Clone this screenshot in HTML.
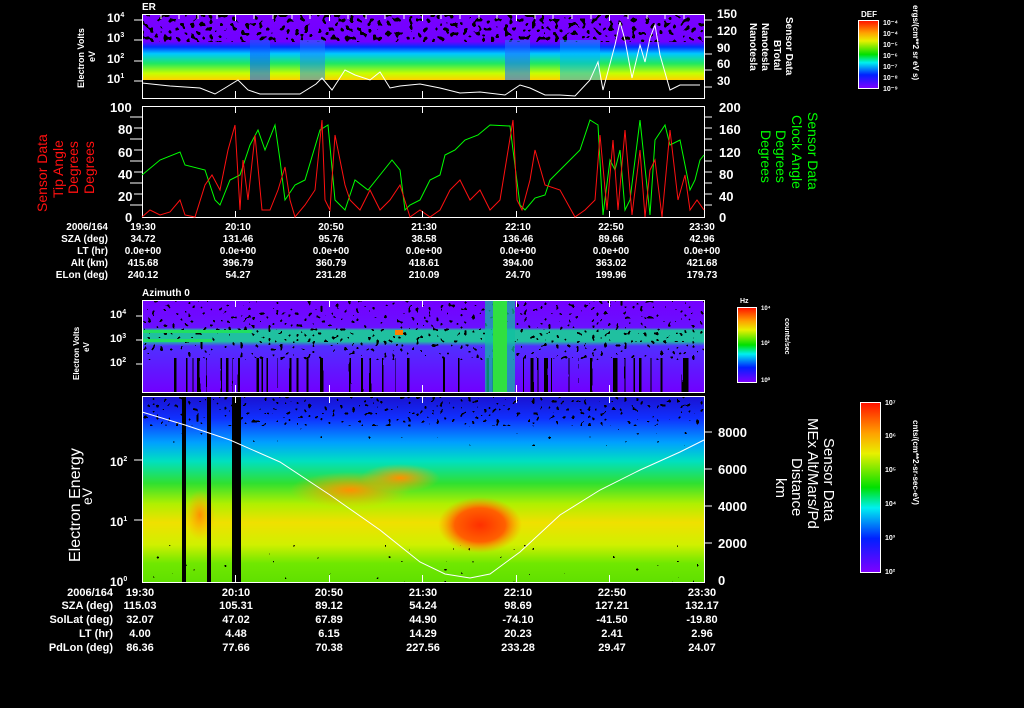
<!DOCTYPE html>
<html><head><meta charset="utf-8"><style>
html,body{margin:0;padding:0;background:#000;width:1024px;height:708px;overflow:hidden}
svg{display:block}
text{font-family:"Liberation Sans",sans-serif;fill:#fff;font-weight:bold}
</style></head><body>
<svg width="1024" height="708" viewBox="0 0 1024 708" xmlns="http://www.w3.org/2000/svg">
<defs>
<filter id="spk" x="0" y="0" width="100%" height="100%">
<feTurbulence type="fractalNoise" baseFrequency="0.22" numOctaves="1" seed="3" result="n"/>
<feColorMatrix in="n" type="matrix" values="0 0 0 0 0  0 0 0 0 0  0 0 0 0 0  1 0 0 0 0"/>
<feComponentTransfer><feFuncA type="discrete" tableValues="0 0 0 0 0 0 1 1 1 1"/></feComponentTransfer>
<feComposite in="SourceGraphic" operator="in"/>
</filter>
<filter id="spk2" x="0" y="0" width="100%" height="100%">
<feTurbulence type="fractalNoise" baseFrequency="0.25" numOctaves="1" seed="9" result="n"/>
<feColorMatrix in="n" type="matrix" values="0 0 0 0 0  0 0 0 0 0  0 0 0 0 0  1 0 0 0 0"/>
<feComponentTransfer><feFuncA type="discrete" tableValues="0 0 0 0 0 0 1 1 1"/></feComponentTransfer>
<feComposite in="SourceGraphic" operator="in"/>
</filter>
<filter id="spk3" x="0" y="0" width="100%" height="100%">
<feTurbulence type="fractalNoise" baseFrequency="0.25" numOctaves="1" seed="5" result="n"/>
<feColorMatrix in="n" type="matrix" values="0 0 0 0 0  0 0 0 0 0  0 0 0 0 0  1 0 0 0 0"/>
<feComponentTransfer><feFuncA type="discrete" tableValues="0 0 0 0 0 0 1 1"/></feComponentTransfer>
<feComposite in="SourceGraphic" operator="in"/>
</filter>
<filter id="strp" x="0" y="0" width="100%" height="100%">
<feTurbulence type="fractalNoise" baseFrequency="0.3 0.0008" numOctaves="1" seed="7" result="n"/>
<feColorMatrix in="n" type="matrix" values="0 0 0 0 0  0 0 0 0 0  0 0 0 0 0  1 0 0 0 0"/>
<feComponentTransfer><feFuncA type="discrete" tableValues="0 0 0 0 0 1 1 1"/></feComponentTransfer>
<feComposite in="SourceGraphic" operator="in"/>
</filter>
<linearGradient id="p1" x1="0" y1="0" x2="0" y2="1">
<stop offset="0" stop-color="#7a00ff"/><stop offset="0.42" stop-color="#7000ff"/>
<stop offset="0.5" stop-color="#0030ff"/><stop offset="0.6" stop-color="#00c8ff"/>
<stop offset="0.75" stop-color="#20e860"/><stop offset="0.9" stop-color="#c8ff00"/>
<stop offset="1" stop-color="#ffd000"/></linearGradient>
<linearGradient id="p3" x1="0" y1="0" x2="0" y2="1">
<stop offset="0" stop-color="#7400ff"/><stop offset="0.3" stop-color="#6a10ff"/>
<stop offset="0.33" stop-color="#20c0a0"/><stop offset="0.45" stop-color="#20c0a0"/><stop offset="0.5" stop-color="#5030ff"/>
<stop offset="1" stop-color="#7000ff"/></linearGradient>
<linearGradient id="p4" x1="0" y1="0" x2="0" y2="1">
<stop offset="0" stop-color="#1a10d0"/><stop offset="0.12" stop-color="#1030ff"/>
<stop offset="0.25" stop-color="#00a0ff"/><stop offset="0.35" stop-color="#00e0c0"/>
<stop offset="0.47" stop-color="#30e030"/><stop offset="0.58" stop-color="#b0f000"/>
<stop offset="0.68" stop-color="#f0e000"/><stop offset="0.8" stop-color="#d0f000"/>
<stop offset="0.9" stop-color="#70e800"/><stop offset="1" stop-color="#60e000"/></linearGradient>
<linearGradient id="cb" x1="0" y1="0" x2="0" y2="1">
<stop offset="0" stop-color="#ff1000"/><stop offset="0.18" stop-color="#ffa000"/>
<stop offset="0.3" stop-color="#e8f000"/><stop offset="0.5" stop-color="#00e000"/>
<stop offset="0.62" stop-color="#00f0f0"/><stop offset="0.8" stop-color="#0020ff"/>
<stop offset="1" stop-color="#8000ff"/></linearGradient>
<radialGradient id="org" cx="0.5" cy="0.5" r="0.5"><stop offset="0" stop-color="#ff3000"/><stop offset="0.6" stop-color="#ff6000"/><stop offset="1" stop-color="#ff9000" stop-opacity="0"/></radialGradient>
<radialGradient id="org2" cx="0.5" cy="0.5" r="0.5"><stop offset="0" stop-color="#ff9000"/><stop offset="1" stop-color="#ffb000" stop-opacity="0"/></radialGradient>
</defs>

<!-- Panel 1 -->
<rect x="142" y="14" width="562" height="66" fill="url(#p1)"/>
<rect x="142" y="14" width="562" height="28" fill="#000" filter="url(#spk)"/>
<rect x="250" y="40" width="20" height="40" fill="#1060ff" opacity="0.6"/>
<rect x="300" y="40" width="25" height="40" fill="#2080ff" opacity="0.5"/>
<rect x="505" y="40" width="25" height="40" fill="#2070ff" opacity="0.6"/>
<rect x="560" y="40" width="40" height="40" fill="#00b0ff" opacity="0.5"/>
<polyline fill="none" stroke="#fff" stroke-width="1" points="142,83 170,86 200,88 215,94 225,88 238,80 248,90 260,94 300,94 316,84 322,78 332,90 345,70 355,75 370,80 380,72 390,88 400,86 420,84 440,88 460,93 480,92 505,95 520,85 530,88 545,95 560,95 575,96 590,80 598,62 603,90 615,45 620,22 625,40 632,78 640,45 645,62 650,38 655,25 660,55 670,90 680,85 700,85"/>
<rect x="142.5" y="14.5" width="562" height="84" fill="none" stroke="#fff"/>
<text x="142" y="10" font-size="10">ER</text>
<g font-size="12"><text x="107" y="22">10<tspan font-size="7" dy="-5">4</tspan></text><text x="107" y="42">10<tspan font-size="7" dy="-5">3</tspan></text><text x="107" y="63">10<tspan font-size="7" dy="-5">2</tspan></text><text x="107" y="83">10<tspan font-size="7" dy="-5">1</tspan></text></g>
<g font-size="12"><text x="717" y="18">150</text><text x="717" y="35">120</text><text x="717" y="52">90</text><text x="717" y="68">60</text><text x="717" y="85">30</text></g>
<text transform="translate(84,88) rotate(-90)" font-size="9">Electron Volts</text>
<text transform="translate(95,62) rotate(-90)" font-size="9">eV</text>
<g font-size="10"><text transform="translate(786,17) rotate(90)">Sensor Data</text><text transform="translate(774,40) rotate(90)">BTotal</text><text transform="translate(762,23) rotate(90)">Nanotesla</text><text transform="translate(750,23) rotate(90)">Nanotesla</text></g>
<rect x="858.5" y="20.5" width="20" height="68" fill="url(#cb)" stroke="#fff"/>
<text x="861" y="17" font-size="8">DEF</text>
<g font-size="7"><text x="883" y="25">10⁻⁴</text><text x="883" y="36">10⁻⁴</text><text x="883" y="47">10⁻⁵</text><text x="883" y="58">10⁻⁶</text><text x="883" y="69">10⁻⁷</text><text x="883" y="80">10⁻⁸</text><text x="883" y="91">10⁻⁹</text></g>
<text transform="translate(913,5) rotate(90)" font-size="8">ergs/(cm**2 sr eV s)</text>

<!-- Panel 2 -->
<rect x="142.5" y="106.5" width="562" height="111" fill="none" stroke="#fff"/>
<polyline fill="none" stroke="#00ff00" stroke-width="1" points="142,175 160,160 180,152 185,165 205,170 215,200 220,205 230,180 240,175 250,145 258,130 265,150 275,125 280,160 285,200 295,185 305,180 320,130 328,125 335,200 345,210 355,180 368,190 380,175 392,160 400,170 405,210 410,205 420,200 430,180 440,175 445,155 455,150 465,140 478,135 490,125 510,126 513,150 520,205 525,210 535,198 545,195 550,180 560,170 570,160 580,150 590,120 598,125 603,215 610,160 615,170 620,150 625,210 630,200 640,120 650,215 655,140 665,125 670,145 680,140 690,190 695,180 700,160 704,155"/>
<polyline fill="none" stroke="#ff1010" stroke-width="1" points="142,217 150,210 160,215 170,212 180,200 185,215 195,217 205,185 212,175 220,190 228,150 235,125 240,210 243,160 248,200 255,135 262,210 270,210 278,190 285,167 290,200 295,217 305,205 315,190 322,120 325,200 330,210 335,135 340,160 345,185 350,200 360,210 370,190 380,210 390,200 400,185 410,217 420,210 430,217 440,210 450,190 460,180 470,200 480,190 490,210 500,200 513,120 517,200 522,210 530,180 535,150 545,185 560,190 575,217 585,210 595,200 600,135 607,210 613,140 618,210 625,130 632,215 640,150 645,217 650,170 655,160 662,217 670,130 678,200 685,175 690,210 697,200 704,210"/>
<g font-size="13"><text x="110" y="112">100</text><text x="118" y="134">80</text><text x="118" y="157">60</text><text x="118" y="179">40</text><text x="118" y="201">20</text><text x="125" y="222">0</text></g>
<g font-size="13"><text x="719" y="112">200</text><text x="719" y="134">160</text><text x="719" y="157">120</text><text x="719" y="179">80</text><text x="719" y="201">40</text><text x="719" y="222">0</text></g>
<g font-size="14"><text transform="translate(47,212) rotate(-90)" style="fill:#ff1010;font-weight:normal">Sensor Data</text><text transform="translate(63,198) rotate(-90)" style="fill:#ff1010;font-weight:normal">Tip Angle</text><text transform="translate(78,194) rotate(-90)" style="fill:#ff1010;font-weight:normal">Degrees</text><text transform="translate(94,194) rotate(-90)" style="fill:#ff1010;font-weight:normal">Degrees</text></g>
<g><text transform="translate(808,112) rotate(90)" font-size="14" style="fill:#00ff00;font-weight:normal">Sensor Data</text><text transform="translate(792,115) rotate(90)" font-size="14" style="fill:#00ff00;font-weight:normal">Clock Angle</text><text transform="translate(776,130) rotate(90)" font-size="14" style="fill:#00ff00;font-weight:normal">Degrees</text><text transform="translate(761,130) rotate(90)" font-size="14" style="fill:#00ff00;font-weight:normal">Degrees</text></g>

<!-- Table 1 -->
<g font-size="10" text-anchor="end"><text x="108" y="230">2006/164</text><text x="108" y="242">SZA (deg)</text><text x="108" y="254">LT (hr)</text><text x="108" y="266">Alt (km)</text><text x="108" y="278">ELon (deg)</text></g>
<g font-size="10" text-anchor="middle">
<text x="143" y="230">19:30</text><text x="143" y="242">34.72</text><text x="143" y="254">0.0e+00</text><text x="143" y="266">415.68</text><text x="143" y="278">240.12</text>
<text x="238" y="230">20:10</text><text x="238" y="242">131.46</text><text x="238" y="254">0.0e+00</text><text x="238" y="266">396.79</text><text x="238" y="278">54.27</text>
<text x="331" y="230">20:50</text><text x="331" y="242">95.76</text><text x="331" y="254">0.0e+00</text><text x="331" y="266">360.79</text><text x="331" y="278">231.28</text>
<text x="424" y="230">21:30</text><text x="424" y="242">38.58</text><text x="424" y="254">0.0e+00</text><text x="424" y="266">418.61</text><text x="424" y="278">210.09</text>
<text x="518" y="230">22:10</text><text x="518" y="242">136.46</text><text x="518" y="254">0.0e+00</text><text x="518" y="266">394.00</text><text x="518" y="278">24.70</text>
<text x="611" y="230">22:50</text><text x="611" y="242">89.66</text><text x="611" y="254">0.0e+00</text><text x="611" y="266">363.02</text><text x="611" y="278">199.96</text>
<text x="702" y="230">23:30</text><text x="702" y="242">42.96</text><text x="702" y="254">0.0e+00</text><text x="702" y="266">421.68</text><text x="702" y="278">179.73</text>
</g>

<!-- Panel 3 -->
<rect x="142" y="300" width="562" height="92" fill="url(#p3)"/>
<rect x="142" y="300" width="562" height="60" fill="#000" filter="url(#spk2)"/>
<rect x="142" y="358" width="562" height="34" fill="#000" filter="url(#strp)"/>
<rect x="485" y="300" width="30" height="92" fill="#10c0a0" opacity="0.7"/>
<rect x="493" y="300" width="14" height="92" fill="#30e040"/>
<rect x="142" y="330" width="110" height="3" fill="#20e060"/>
<rect x="142" y="339" width="70" height="3" fill="#20e060"/>
<rect x="395" y="330" width="8" height="5" fill="#ff8000"/>
<rect x="142.5" y="300.5" width="562" height="92" fill="none" stroke="#fff"/>
<text x="142" y="296" font-size="10">Azimuth 0</text>
<g font-size="11"><text x="110" y="318">10<tspan font-size="7" dy="-4">4</tspan></text><text x="110" y="342">10<tspan font-size="7" dy="-4">3</tspan></text><text x="110" y="366">10<tspan font-size="7" dy="-4">2</tspan></text></g>
<text transform="translate(79,380) rotate(-90)" font-size="8">Electron Volts</text>
<text transform="translate(89,352) rotate(-90)" font-size="8">eV</text>
<rect x="737.5" y="307.5" width="19" height="75" fill="url(#cb)" stroke="#fff"/>
<text x="740" y="303" font-size="7">Hz</text>
<g font-size="6"><text x="761" y="310">10⁴</text><text x="761" y="345">10²</text><text x="761" y="382">10⁰</text></g>
<text transform="translate(785,318) rotate(90)" font-size="7">counts/sec</text>

<!-- Panel 4 -->
<rect x="142" y="396" width="562" height="186" fill="url(#p4)"/>
<rect x="142" y="396" width="562" height="30" fill="#000" filter="url(#spk2)"/>
<rect x="142" y="424" width="562" height="22" fill="#000" filter="url(#spk3)"/>
<rect x="142" y="545" width="562" height="37" fill="#000" filter="url(#spk3)"/>
<ellipse cx="200" cy="515" rx="15" ry="25" fill="url(#org2)"/>
<ellipse cx="350" cy="490" rx="60" ry="18" fill="url(#org2)"/>
<ellipse cx="400" cy="478" rx="40" ry="14" fill="url(#org2)"/>
<ellipse cx="480" cy="525" rx="42" ry="28" fill="url(#org)"/>
<rect x="182" y="396" width="4" height="186" fill="#000"/>
<rect x="207" y="396" width="4" height="186" fill="#000"/>
<rect x="232" y="396" width="9" height="186" fill="#000"/>
<polyline fill="none" stroke="#fff" stroke-width="1" points="142,412 185,425 230,440 280,462 330,495 380,530 420,562 445,574 470,578 490,574 520,552 560,515 600,490 640,470 680,452 704,440"/>
<rect x="142.5" y="396.5" width="562" height="186" fill="none" stroke="#fff"/>
<g font-size="12"><text x="110" y="466">10<tspan font-size="7" dy="-5">2</tspan></text><text x="110" y="526">10<tspan font-size="7" dy="-5">1</tspan></text><text x="110" y="586">10<tspan font-size="7" dy="-5">0</tspan></text></g>
<text transform="translate(80,562) rotate(-90)" font-size="16" style="font-weight:normal">Electron Energy</text>
<text transform="translate(92,505) rotate(-90)" font-size="14" style="font-weight:normal">eV</text>
<g font-size="13"><text x="718" y="437">8000</text><text x="718" y="474">6000</text><text x="718" y="511">4000</text><text x="718" y="548">2000</text><text x="718" y="585">0</text></g>
<g font-size="15"><text transform="translate(824,438) rotate(90)" style="font-weight:normal">Sensor Data</text><text transform="translate(808,418) rotate(90)" style="font-weight:normal">MEx Alt/Mars/Pd</text><text transform="translate(792,458) rotate(90)" style="font-weight:normal">Distance</text><text transform="translate(776,478) rotate(90)" style="font-weight:normal">km</text></g>
<rect x="860.5" y="402.5" width="20" height="170" fill="url(#cb)" stroke="#fff"/>
<g font-size="7"><text x="885" y="405">10⁷</text><text x="885" y="438">10⁶</text><text x="885" y="472">10⁵</text><text x="885" y="506">10⁴</text><text x="885" y="540">10³</text><text x="885" y="574">10²</text></g>
<text transform="translate(913,420) rotate(90)" font-size="8">cnts/(cm**2-sr-sec-eV)</text>

<!-- ticks -->
<g stroke="#fff" stroke-width="1">
<path d="M161 14v5M179 14v5M198 14v5M217 14v5M254 14v5M273 14v5M292 14v5M310 14v5M348 14v5M366 14v5M385 14v5M404 14v5M441 14v5M460 14v5M479 14v5M497 14v5M535 14v5M553 14v5M572 14v5M591 14v5M628 14v5M647 14v5M665 14v5M684 14v5"/>
<path d="M235.5 14v7M329.5 14v7M422.5 14v7M516.5 14v7M609.5 14v7M235.5 98v-7M329.5 98v-7M422.5 98v-7M516.5 98v-7M609.5 98v-7"/>
<path d="M235.5 106v7M329.5 106v7M422.5 106v7M516.5 106v7M609.5 106v7M235.5 218v-7M329.5 218v-7M422.5 218v-7M516.5 218v-7M609.5 218v-7"/>
<path d="M235.5 300v7M329.5 300v7M422.5 300v7M516.5 300v7M609.5 300v7M235.5 392v-7M329.5 392v-7M422.5 392v-7M516.5 392v-7M609.5 392v-7"/>
<path d="M235.5 396v7M329.5 396v7M422.5 396v7M516.5 396v7M609.5 396v7M235.5 582v-7M329.5 582v-7M422.5 582v-7M516.5 582v-7M609.5 582v-7"/>
<path d="M130 117h12M134 128h8M130 139h12M134 150h8M130 161h12M134 172h8M130 183h12M134 194h8M130 205h12"/>
<path d="M704 117h8M704 128h8M704 139h8M704 150h8M704 161h8M704 172h8M704 183h8M704 194h8M704 205h8M704 20h8M704 37h8M704 54h8M704 70h8M704 87h8"/>
<path d="M134 20h8M134 40h8M134 61h8M134 81h8M136 316h6M136 340h6M136 364h6M134 460h8M134 520h8M704 432h8M704 469h8M704 506h8M704 543h8"/>
</g>

<!-- Table 2 -->
<g font-size="11" text-anchor="end"><text x="113" y="596">2006/164</text><text x="113" y="609">SZA (deg)</text><text x="113" y="623">SolLat (deg)</text><text x="113" y="637">LT (hr)</text><text x="113" y="651">PdLon (deg)</text></g>
<g font-size="11" text-anchor="middle">
<text x="140" y="596">19:30</text><text x="140" y="609">115.03</text><text x="140" y="623">32.07</text><text x="140" y="637">4.00</text><text x="140" y="651">86.36</text>
<text x="236" y="596">20:10</text><text x="236" y="609">105.31</text><text x="236" y="623">47.02</text><text x="236" y="637">4.48</text><text x="236" y="651">77.66</text>
<text x="329" y="596">20:50</text><text x="329" y="609">89.12</text><text x="329" y="623">67.89</text><text x="329" y="637">6.15</text><text x="329" y="651">70.38</text>
<text x="423" y="596">21:30</text><text x="423" y="609">54.24</text><text x="423" y="623">44.90</text><text x="423" y="637">14.29</text><text x="423" y="651">227.56</text>
<text x="518" y="596">22:10</text><text x="518" y="609">98.69</text><text x="518" y="623">-74.10</text><text x="518" y="637">20.23</text><text x="518" y="651">233.28</text>
<text x="612" y="596">22:50</text><text x="612" y="609">127.21</text><text x="612" y="623">-41.50</text><text x="612" y="637">2.41</text><text x="612" y="651">29.47</text>
<text x="702" y="596">23:30</text><text x="702" y="609">132.17</text><text x="702" y="623">-19.80</text><text x="702" y="637">2.96</text><text x="702" y="651">24.07</text>
</g>
</svg>
</body></html>
